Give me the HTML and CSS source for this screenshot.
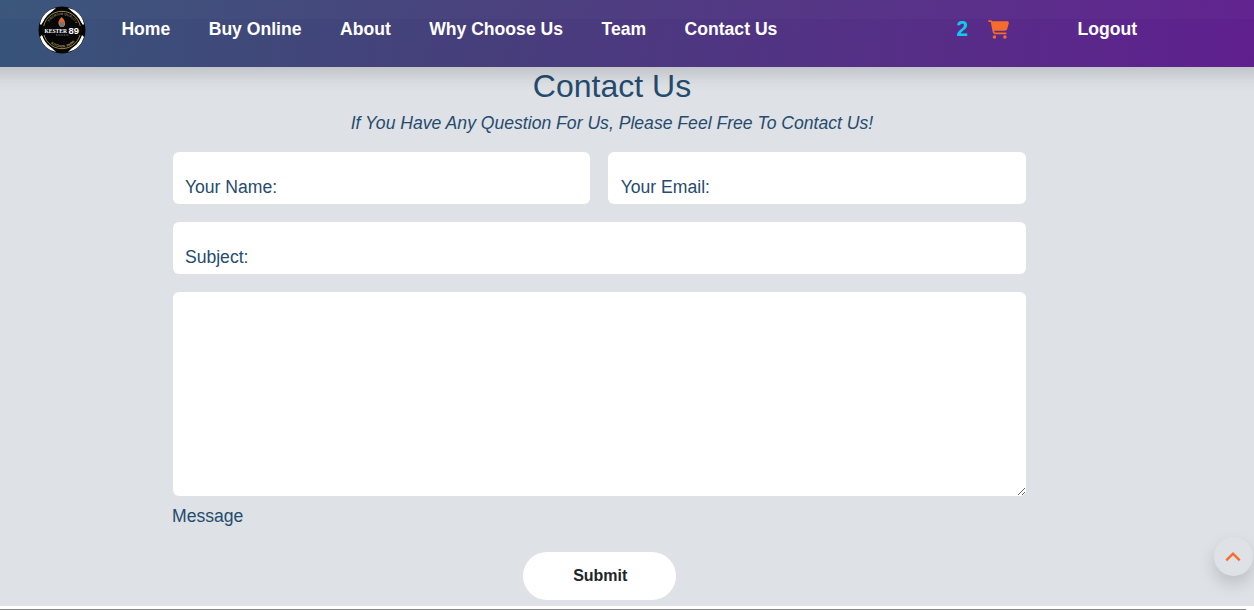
FILE: index.html
```html
<!DOCTYPE html>
<html lang="en">
<head>
<meta charset="utf-8">
<title>Contact Us</title>
<link rel="stylesheet" href="styles.css">
</head>
<body>
<header class="navbar">
  <svg class="logo" viewBox="0 0 48 48">
    <defs><clipPath id="round"><circle cx="24" cy="24" r="23.5"/></clipPath>
    <path id="top-arc" d="M9 24a15 15 0 0 1 30 0"/><path id="bottom-arc" d="M6.500 24a17.500 17.500 0 0 0 35 0"/></defs>
    <g clip-path="url(#round)">
      <rect width="48" height="48" fill="#050505"/>
      <path d="M2 18Q5 4 18 2L10 9 3 19zM46 18Q43 4 30 2l8 7 7 10zM2 31q4 13 16 15l-8-8-6-9zM46 31q-4 13-16 15l8-8 6-9z" fill="#fff"/>
      <circle cx="24" cy="24" r="20.5" fill="#060607"/>
      <circle cx="24" cy="24" r="18.700" fill="none" stroke="#9b8238" stroke-width="1"/>
      <text class="ring-text" fill="#817653"><textPath href="#top-arc" startOffset="18%">PREMIUM QUALITY</textPath></text>
      <rect x="4.500" y="20" width="39" height="9" fill="#08080a"/>
      <path d="M23.500 11q5 4 3 9h-5q-3-4 2-9" fill="#e4672b"/>
      <path d="M22 16h4v5h-4z" fill="#747579"/>
      <text class="logo-name" x="6.500" y="27.200" textLength="22.500" lengthAdjust="spacingAndGlyphs">KESTER</text>
      <text class="logo-number" x="30.500" y="27.500" textLength="10.500" lengthAdjust="spacingAndGlyphs">89</text>
      <path d="M18 29h13" stroke="#77777b" stroke-dasharray="1 .6"/>
      <text class="ring-text" fill="#b3a064"><textPath href="#bottom-arc" startOffset="28%">KITCHEN, PARK</textPath></text>
    </g>
  </svg>
  <nav class="links"><a>Home</a><a>Buy Online</a><a>About</a><a>Why Choose Us</a><a>Team</a><a>Contact Us</a></nav>
  <div class="account">
    <span class="count">2</span>
    <svg class="cart" viewBox="0 0 576 512"><path fill="#f76c2a" d="M0 24C0 10.700 10.700 0 24 0H69.500c22 0 41.500 12.800 50.600 32h411c26.300 0 45.500 25 38.600 50.400l-41 152.300c-8.500 31.400-37 53.300-69.500 53.300H170.700l5.400 28.500c2.200 11.300 12.100 19.500 23.600 19.500H488c13.300 0 24 10.700 24 24s-10.700 24-24 24H199.700c-34.600 0-64.300-24.600-70.700-58.500L77.400 54.500c-.7-3.800-4-6.500-7.900-6.500H24C10.700 48 0 37.300 0 24zM128 464a48 48 0 1 1 96 0 48 48 0 1 1-96 0zm336-48a48 48 0 1 1 0 96 48 48 0 1 1 0-96z"/></svg>
    <a class="logout">Logout</a>
  </div>
</header>
<main class="contact">
  <div class="intro"><h2>Contact Us</h2><p>If You Have Any Question For Us, Please Feel Free To Contact Us!</p></div>
  <form class="form">
    <div class="row"><div class="field">Your Name:</div><div class="field">Your Email:</div></div>
    <div class="field">Subject:</div>
    <textarea class="message" id="message"></textarea>
    <label class="message-label" for="message">Message</label>
    <button class="submit" type="button">Submit</button>
  </form>
</main>
<footer class="edge"></footer>
<a class="to-top"><svg viewBox="0 0 16 10"><path d="M1.300 8.300 8 1.700l6.700 6.600" fill="none" stroke="#f76c2a" stroke-width="2.400"/></svg></a>
</body>
</html>
```
FILE: styles.css
```css
* { box-sizing: border-box; }
body { margin: 0; height: 610px; overflow: hidden; display: flex; flex-direction: column; background: #fff; color: #264b6d; font-family: "Liberation Sans", Arial, sans-serif; font-size: 17.6px; }
.navbar { position: relative; flex: none; height: 67px; margin: 0 -24px; padding: 6px 141px 0 62px; display: flex; align-items: flex-start; background: linear-gradient(rgba(255,255,255,.02) 19px, transparent 19px), linear-gradient(100deg, #375579 0%, #463f7b 38%, #562e87 72%, #601f8f 100%); box-shadow: 0 8px 16px rgba(0,0,0,.15); color: #fff; font-weight: 700; }
.logo { width: 48px; height: 48px; flex: none; }
.ring-text { font-size: 3.4px; }
.logo-name { font: 700 7px "Liberation Serif", serif; fill: #fff; }
.logo-number { font: 700 9.5px "Liberation Sans", sans-serif; fill: #fff; }
.links { display: flex; gap: 38.4px; margin-left: 35.4px; padding-top: 13px; line-height: 20px; white-space: nowrap; }
.account { display: flex; margin-left: auto; line-height: 20px; }
.count { font-size: 22.5px; color: #0dcaf0; padding-top: 12.5px; margin-right: 20px; transform: scaleX(.93); }
.cart { width: 21px; height: 19px; margin: 14px 68px 0 0; }
.logout { padding-top: 13px; }
.contact { height: 539px; flex: none; background: #dee1e6; padding: 0 228px 0 172.5px; }
.intro { text-align: center; margin-left: 25.5px; }
h2 { margin: 0; font-size: 32px; font-weight: 400; line-height: 38px; }
p { margin: 8px 0 0; line-height: 20px; font-style: italic; }
.form { display: flex; flex-direction: column; margin-top: 19px; }
.row { display: grid; grid-template-columns: 1fr 1fr; gap: 18px; }
.field { height: 52px; padding: 25px 12.4px 0; border-radius: 6px; background: #fff; line-height: 20px; }
.row + .field { margin-top: 18px; }
.message { display: block; margin: 18px 0 0; width: 100%; height: 204px; border: 0; border-radius: 6px; background: #fff; resize: vertical; }
.message-label { margin: 10px 0 0 -.5px; line-height: 20px; }
.submit { align-self: center; width: 153px; height: 48px; margin-top: 26px; padding: 0 5px 0 7px; border: 0; border-radius: 24px; background: #fff; color: #212529; font: 700 16px "Liberation Sans", Arial, sans-serif; }
.edge { height: 4px; margin-right: 8px; border-bottom: 1px solid #858585; }
.to-top { position: absolute; right: 1px; top: 537px; width: 39px; height: 39px; padding-right: 1px; border-radius: 50%; background: #dee1e6; box-shadow: 0 8px 16px rgba(0,0,0,.15); display: flex; align-items: center; justify-content: center; }
.to-top svg { width: 16px; height: 10px; }
.navbar, .to-top { z-index: 1; }
```
